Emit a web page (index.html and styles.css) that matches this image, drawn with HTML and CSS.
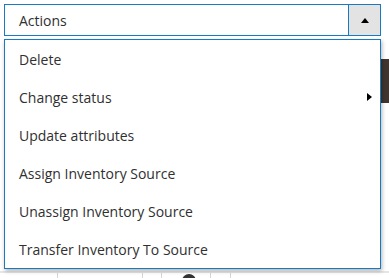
FILE: index.html
```html
<!DOCTYPE html>
<html>
<head>
    <link rel="stylesheet" href="styles.css">
</head>
<body>
    <div class="page">
        <div class="action-select">
            <span class="action-label">Actions</span>
            <span class="action-toggle"><span class="arrow-up"></span></span>
        </div>
        <div class="page-bar"></div>
        <div class="grid-row">
            <div class="cell c1"></div>
            <div class="cell c2"></div>
            <div class="cell c3"></div>
            <div class="cell c4"><span class="thumb"></span></div>
            <div class="cell c5"></div>
            <div class="cell c6"></div>
        </div>

        <ul class="action-menu">
            <li>Delete</li>
            <li class="has-sub">Change status <span class="arrow-right"></span></li>
            <li>Update attributes</li>
            <li>Assign Inventory Source</li>
            <li>Unassign Inventory Source</li>
            <li>Transfer Inventory To Source</li>
        </ul>
    </div>
</body>
</html>
```

FILE: styles.css
```css
body {
    margin: 0;
    background: #fff;
    font-family: "Open Sans", "Liberation Sans", sans-serif;
    font-size: 14px;
    color: #303030;
}
.page {
    position: relative;
    height: 278px;
    overflow: hidden;
    padding-top: 4px;
    box-sizing: border-box;
}
.action-select {
    display: flex;
    margin-left: 4px;
    width: 377px;
    height: 32px;
    border: 1px solid #1979c3;
    box-sizing: border-box;
}
.action-label {
    flex: 1;
    display: flex;
    align-items: center;
    padding-left: 14px;
}
.action-toggle {
    width: 31px;
    background: #e3e3e3;
    border-left: 1px solid #1979c3;
    display: flex;
    align-items: center;
    justify-content: center;
}
.arrow-up {
    width: 0;
    height: 0;
    border-left: 4px solid transparent;
    border-right: 4px solid transparent;
    border-bottom: 5px solid #000;
    margin-top: 1px;
}
.page-bar {
    margin-top: 23px;
    margin-left: 300px;
    height: 44px;
    background: #41362f;
}
.grid-row {
    margin-top: 168px;
    display: flex;
    border-top: 2px solid #e6e6e6;
    height: 10px;
}
.cell {
    border-right: 1px solid #d6d6d6;
    height: 100%;
}
.c1 { width: 57px; }
.c2 { width: 84px; }
.c3 { width: 18px; }
.c4 { width: 48px; position: relative; }
.c5 { width: 19px; }
.c6 { flex: 1; border-right: none; }
.thumb {
    position: absolute;
    left: 20px;
    top: 1px;
    width: 14px;
    height: 14px;
    border-radius: 50%;
    background: #333;
}
.action-menu {
    position: absolute;
    top: 39px;
    left: 4px;
    width: 377px;
    margin: 0;
    padding: 0;
    list-style: none;
    background: #fff;
    border: 1px solid #1979c3;
    box-sizing: border-box;
    box-shadow: 1px 2px 4px rgba(0, 0, 0, 0.3);
}
.action-menu li {
    height: 38px;
    display: flex;
    align-items: center;
    padding-left: 14px;
}
.has-sub {
    position: relative;
}
.arrow-right {
    position: absolute;
    right: 8px;
    top: 15px;
    width: 0;
    height: 0;
    border-top: 4px solid transparent;
    border-bottom: 4px solid transparent;
    border-left: 5px solid #000;
}
```
